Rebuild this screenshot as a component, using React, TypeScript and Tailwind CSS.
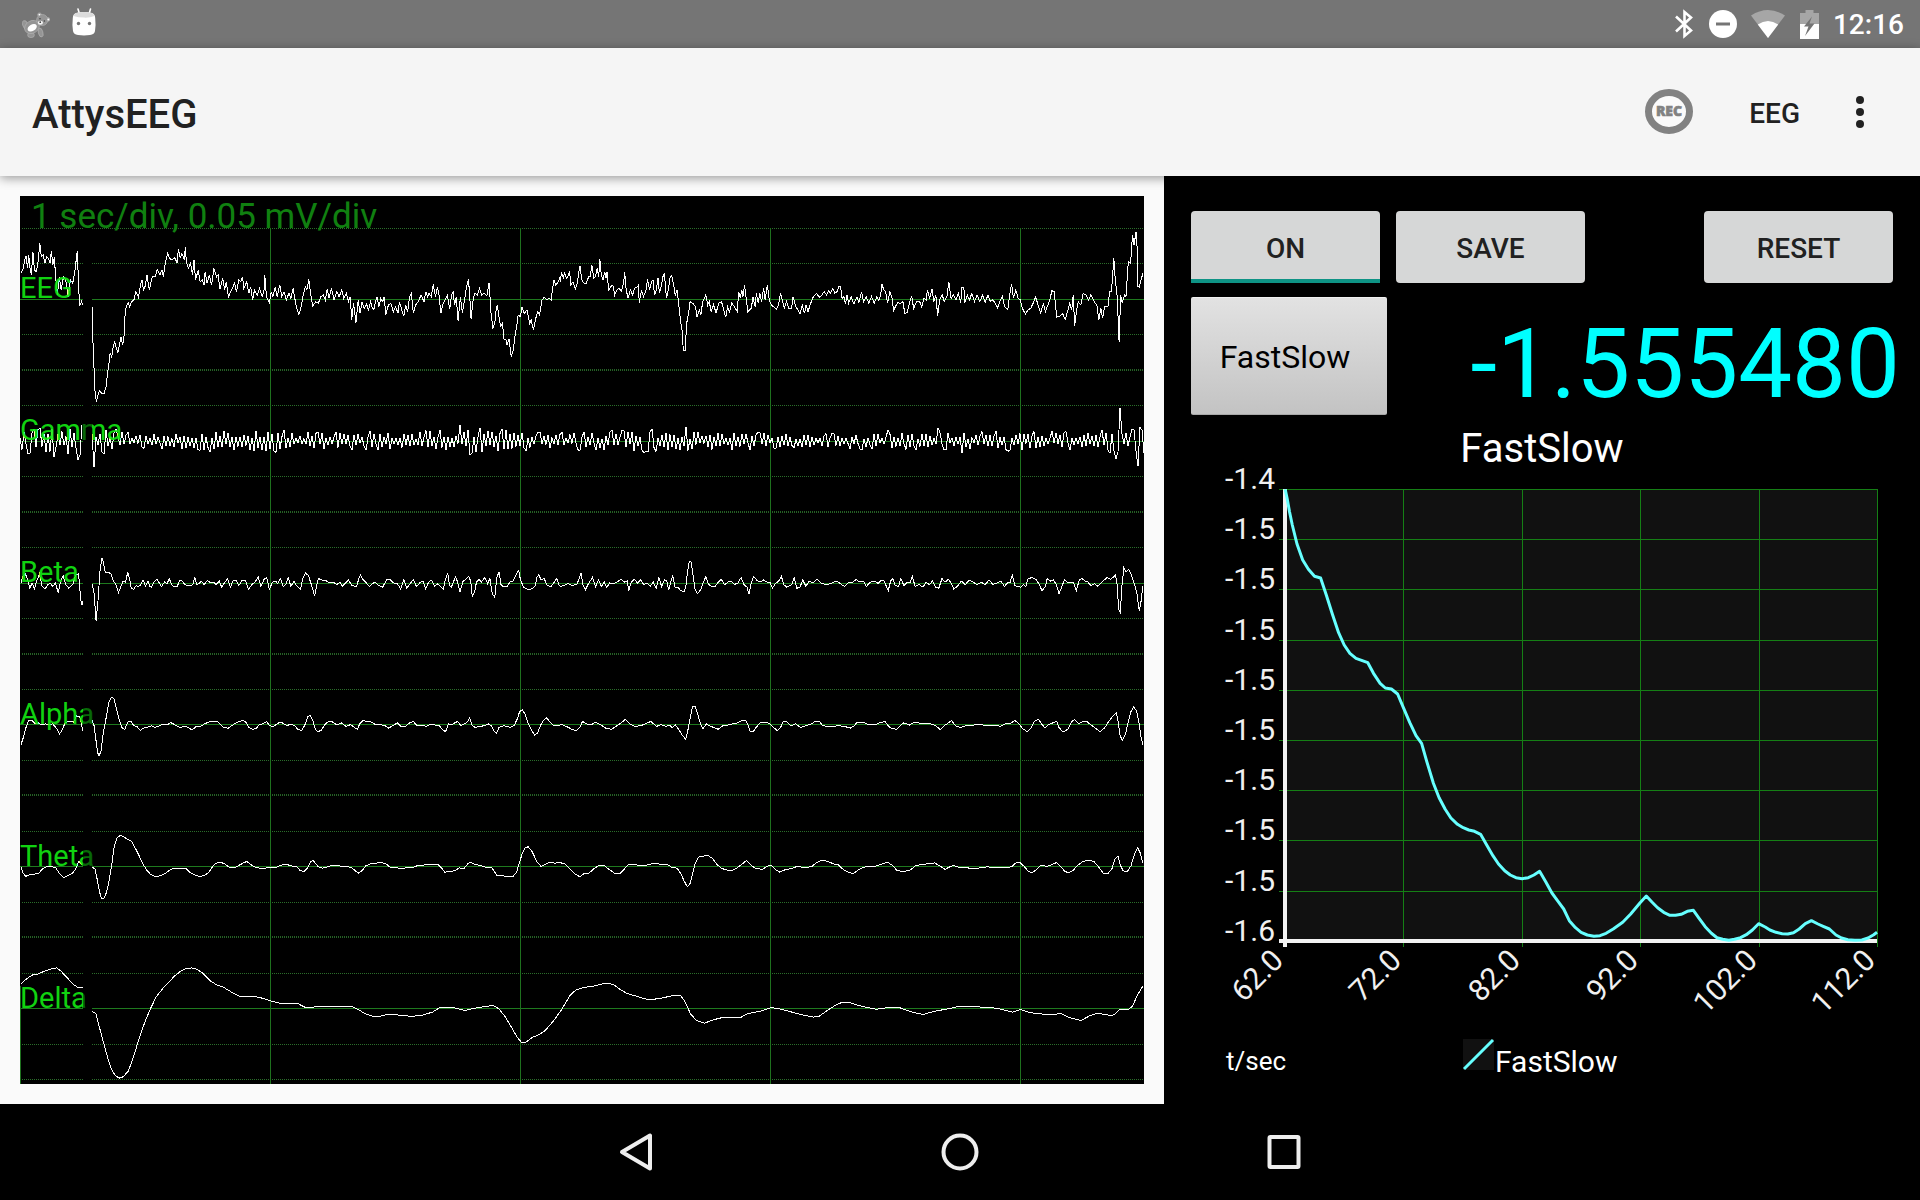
import React, { useState } from 'react';

interface Block {
  x: number;
  y: number;
  kx: number;
  ky: number;
  points: string;
}

const eegBlocks: Block[] = [
  {
    x: -20, y: -16, kx: 2.613, ky: 3,
    points:
      '55,280 62,262 64,240 68,228 72,265 75,225 78,262 82,285 86,215 90,270 95,275 100,240 104,190 108,230 113,225 117,250 122,230 127,235 131,250 134,212 138,255 142,232 146,300 150,345 155,290 160,330 166,290 172,300 178,352 184,300 190,310 196,270 202,212 205,310 208,378 213,365 216,375',
  },
  {
    x: -20, y: -16, kx: 2.613, ky: 3,
    points:
      '241,380 242,460 245,540 247,620 252,665 256,645 260,632 266,640 272,642 277,620 281,580 286,540 288,518 292,530 296,500 300,485 304,505 308,518 312,495 316,470 321,495 325,460 327,400 330,380 335,368 339,380 344,365 350,360 355,335 362,352 367,315 371,300 375,330 378,325 384,285 390,330 398,290 406,290 411,268 418,285 423,270 427,290 432,250 438,220 443,235 449,240 457,233 463,250 466,207 471,235 475,220 482,240 484,202 487,245 492,265 498,250 503,285 507,240 511,300 518,270 523,305 529,300 533,315 536,275 541,310 547,285 553,315 559,265 566,290 570,285 575,328 582,295 587,330 591,305 597,350 605,330 613,310 618,335 624,300 629,305 634,290 637,325 645,305 650,340 655,320 660,360 665,330 672,345 678,325 685,350 690,330 692,285 696,350 704,368 709,335 713,350 719,322 724,350 731,315 736,350 742,335 748,360 755,340 760,355 766,325 771,360 775,385 781,403 787,380 792,345 798,320 802,330 807,298 812,345 817,378 825,365 832,370 838,350 845,345 850,360 855,328 860,355 866,325 873,360 880,335 886,350 893,330 898,355 905,340 911,365 915,350 919,420 924,370 930,428 936,360 941,400 946,365 952,385 958,372 963,392 968,365 972,380 977,390 981,365 985,350 990,380 995,355 1000,365 1004,350 1008,405 1015,375 1021,370 1028,395 1034,380 1040,400 1044,365 1050,390 1055,408 1060,375 1065,395 1070,352 1075,340 1080,400 1086,375 1093,365 1100,345 1108,365 1113,335 1117,350 1121,340 1127,350 1132,313 1138,350 1143,320 1147,345 1152,400 1158,370 1163,360 1169,345 1175,388 1180,345 1184,335 1188,375 1192,350 1197,423 1203,350 1208,398 1214,360 1219,320 1224,298 1227,340 1231,418 1235,370 1240,340 1247,345 1253,325 1259,345 1265,340 1272,348 1278,308 1283,400 1288,443 1293,430 1297,380 1300,378 1304,410 1308,438 1313,430 1317,478 1322,480 1325,495 1330,478 1336,530 1341,510 1345,475 1350,440 1354,405 1360,410 1364,380 1370,400 1377,390 1384,430 1388,420 1394,450 1400,415 1405,395 1410,405 1416,360 1422,352 1429,360 1435,355 1440,360 1447,300 1452,315 1459,305 1463,290',
  },
  {
    x: 540, y: -16, kx: 2.613, ky: 3,
    points:
      '0,305 4,280 9,292 12,280 17,295 22,285 25,272 28,315 34,305 40,328 45,310 52,257 57,300 63,310 68,312 75,290 79,290 83,255 88,295 93,290 97,265 101,290 104,238 108,285 112,300 117,275 120,295 123,275 127,330 133,320 138,315 143,345 149,330 155,325 160,335 166,310 169,277 173,330 178,355 184,330 190,345 195,325 202,320 205,315 207,368 213,330 218,350 224,335 229,298 234,330 239,305 243,300 247,345 252,330 256,295 260,340 266,310 270,285 273,282 278,355 283,330 288,290 292,287 297,315 301,345 306,330 310,370 316,430 320,460 322,510 327,510 331,430 337,390 340,365 347,370 354,380 358,412 364,390 368,405 373,365 381,345 386,375 390,365 395,395 401,375 408,398 415,370 422,365 428,390 433,412 438,380 443,395 449,370 456,380 463,395 467,335 471,355 475,330 478,350 482,316 487,360 491,395 500,385 504,350 510,380 513,340 518,370 522,340 527,365 532,325 536,360 542,315 547,360 552,375 558,380 565,388 571,375 576,340 581,360 586,385 592,365 598,385 605,385 609,350 616,380 622,390 627,402 633,375 639,400 643,375 648,395 655,370 662,350 670,340 678,352 684,345 690,335 697,345 702,332 706,340 713,325 718,340 724,335 728,320 733,320 737,355 742,350 746,372 750,345 754,370 761,350 768,372 776,350 781,368 788,335 793,365 800,350 807,370 814,350 821,370 828,350 833,360 838,345 841,312 846,330 851,335 856,370 862,335 867,350 872,392 877,378 883,368 890,370 896,365 901,400 907,398 913,370 919,348 924,385 932,365 940,365 945,380 951,355 957,360 960,330 966,355 972,328 977,365 982,345 987,408 992,360 999,345 1004,365 1011,350 1016,306 1022,355 1028,345 1035,360 1041,340 1047,370 1050,322 1055,322 1058,368 1064,345 1070,360 1076,340 1083,365 1090,345 1097,365 1104,345 1111,368 1118,345 1125,365 1130,360 1138,370 1143,385 1149,365 1156,350 1162,380 1170,390 1175,345 1180,312 1185,355 1191,330 1197,355 1203,360 1208,385 1216,402 1223,390 1230,385 1237,368 1243,350 1249,375 1256,400 1263,370 1268,395 1275,375 1280,360 1285,332 1291,335 1295,375 1298,412 1306,408 1313,400 1320,418 1326,395 1332,370 1337,390 1341,345 1345,438 1350,390 1354,365 1361,375 1367,340 1374,345 1381,360 1387,345 1392,355 1398,368 1403,375 1408,420 1413,385 1418,415 1423,380 1432,380 1436,335 1441,335 1447,235 1451,300 1456,350 1461,485 1465,345 1469,370 1475,345 1479,350 1485,245 1491,250 1496,165 1500,195 1505,155 1508,200 1510,320 1514,322 1518,300 1524,278',
  },
];

const betaBlocks: Block[] = [
  {
    x: -20, y: 344, kx: 2.613, ky: 2.8,
    points:
      '55,120 60,100 66,95 72,110 78,135 84,120 90,137 96,115 103,95 110,130 118,137 125,125 132,122 138,130 145,120 152,148 158,115 165,100 172,125 180,135 190,125 198,98 204,95 208,120 210,165 214,182 217,170',
  },
  {
    x: -20, y: 344, kx: 2.613, ky: 2.8,
    points:
      '241,122 246,150 251,227 256,170 261,90 266,50 270,62 275,90 282,90 290,95 296,115 303,125 310,147 316,130 322,115 328,118 334,90 339,110 343,135 349,138 356,128 363,130 368,125 374,112 380,128 387,115 391,130 396,132 402,118 410,110 416,120 422,130 430,118 437,122 442,108 450,128 456,130 463,130 470,113 477,115 483,125 490,128 497,128 504,125 509,105 514,125 520,122 526,115 533,125 542,113 550,120 558,118 565,125 573,115 579,132 588,118 595,108 602,132 610,112 617,112 624,128 633,112 642,115 649,138 658,125 666,118 675,104 682,130 690,110 697,105 704,138 712,118 720,115 726,122 733,108 740,130 747,125 753,105 760,130 768,115 775,128 785,138 792,105 798,92 806,100 812,120 818,140 822,157 828,125 832,108 842,112 850,112 860,120 870,118 880,125 888,118 895,130 903,120 910,112 920,128 932,130 937,110 942,98 948,110 955,118 965,130 973,122 980,118 990,128 1000,132 1010,112 1018,110 1028,120 1038,122 1047,137 1055,112 1063,135 1072,122 1080,110 1088,130 1097,120 1105,115 1112,137 1120,118 1128,112 1136,130 1144,122 1150,130 1158,138 1164,110 1170,92 1174,125 1179,133 1184,120 1190,103 1195,115 1202,145 1210,115 1217,110 1225,102 1230,115 1234,158 1240,145 1245,118 1252,110 1258,118 1267,105 1274,122 1280,108 1286,150 1293,160 1298,105 1304,90 1309,125 1317,132 1325,130 1333,118 1340,115 1347,100 1355,85 1360,112 1368,132 1378,138 1390,137 1398,130 1403,105 1408,97 1414,112 1422,108 1430,128 1440,130 1448,118 1455,108 1462,130',
  },
  {
    x: 540, y: 344, kx: 2.529, ky: 2.8,
    points:
      '0,130 10,128 20,122 30,127 42,125 48,110 53,93 58,125 64,140 72,122 82,105 90,130 97,112 105,130 112,118 118,133 126,120 136,122 145,117 155,110 163,118 170,115 174,142 180,118 188,110 196,120 204,112 212,125 220,120 228,130 236,118 243,135 250,105 257,130 264,112 270,115 275,140 280,118 285,100 291,132 298,132 305,142 314,145 319,125 323,85 327,60 332,62 337,105 342,140 348,150 356,138 362,120 369,102 376,125 384,130 392,130 400,118 408,110 416,125 425,118 433,115 441,125 450,120 458,105 465,125 473,132 478,152 484,118 490,102 497,112 506,118 515,112 524,118 532,120 537,135 545,122 553,115 560,102 566,125 573,132 580,128 586,125 592,105 599,135 607,132 614,112 622,130 630,115 640,120 650,110 662,122 676,125 688,120 700,115 712,125 720,130 728,120 740,118 750,110 756,118 768,115 775,130 785,118 795,115 805,122 812,112 820,115 830,142 836,115 842,108 848,128 856,130 862,108 870,128 878,118 885,120 891,102 898,130 908,125 918,132 926,118 934,125 942,115 950,132 958,135 966,108 974,118 982,110 990,122 996,138 1006,128 1015,115 1025,125 1035,112 1045,118 1055,125 1065,118 1075,125 1085,112 1095,125 1105,120 1115,115 1124,130 1132,120 1138,120 1144,97 1150,128 1158,130 1165,132 1172,125 1178,130 1184,108 1195,105 1205,112 1212,125 1219,142 1228,130 1232,108 1240,115 1248,112 1255,125 1262,150 1270,128 1276,110 1283,118 1290,118 1298,118 1306,142 1313,112 1320,108 1328,115 1335,118 1343,128 1352,122 1360,130 1368,120 1376,112 1384,105 1392,110 1398,105 1405,98 1409,125 1413,195 1417,203 1421,130 1426,77 1432,90 1438,82 1444,95 1452,120 1459,150 1465,198 1469,175 1474,130',
  },
];

const alphaBlocks: Block[] = [
  {
    x: -20, y: 344, kx: 2.613, ky: 2.8,
    points:
      '55,573 62,550 68,525 75,505 84,505 92,515 100,512 108,518 118,515 128,517 138,515 148,528 156,543 163,530 170,512 180,508 192,510 200,492 208,495 213,515 216,535',
  },
  {
    x: -20, y: 344, kx: 2.613, ky: 2.8,
    points:
      '241,505 246,520 250,555 255,595 259,605 264,590 270,540 277,500 284,455 291,440 298,445 305,475 312,505 318,525 326,530 334,510 342,508 350,520 358,522 366,533 375,527 386,524 396,520 404,525 413,522 424,517 436,518 446,511 458,518 470,525 482,522 492,525 502,532 512,523 524,522 534,515 545,510 556,508 568,508 576,517 585,525 596,527 608,518 620,510 636,505 644,512 650,525 660,530 670,528 676,518 686,515 697,508 704,520 715,522 728,512 738,512 750,520 760,515 770,520 778,530 788,533 796,520 804,495 811,491 818,508 824,530 831,537 840,532 850,515 860,508 870,510 880,518 892,512 904,522 916,517 926,525 934,530 940,515 948,506 960,508 972,510 982,518 994,517 1006,520 1016,527 1026,520 1038,512 1048,522 1060,522 1070,512 1080,508 1090,520 1102,518 1114,522 1126,515 1136,518 1148,520 1156,530 1164,537 1172,515 1180,518 1188,512 1196,508 1204,520 1214,515 1222,508 1227,498 1234,520 1242,525 1254,522 1266,520 1276,515 1284,520 1291,535 1297,542 1304,525 1316,520 1326,522 1334,525 1344,518 1352,500 1358,480 1365,476 1372,488 1380,512 1388,530 1397,547 1405,540 1412,520 1420,505 1428,498 1436,508 1446,520 1456,520 1463,518',
  },
  {
    x: 540, y: 344, kx: 2.529, ky: 2.8,
    points:
      '0,515 16,522 30,530 42,534 50,525 57,508 68,515 78,518 90,510 104,518 116,527 130,530 142,522 154,512 166,502 176,515 190,522 204,520 216,515 230,508 244,522 256,517 268,522 276,518 284,525 292,518 300,530 308,545 318,558 323,535 329,500 335,467 342,466 349,490 356,518 362,528 370,515 380,522 390,525 400,530 412,520 424,518 436,515 448,512 460,506 470,505 476,520 481,535 488,538 496,525 506,512 518,510 530,514 540,525 550,534 558,525 564,510 572,508 584,520 596,515 608,525 622,520 636,515 646,507 656,507 664,520 676,522 690,522 704,520 720,522 734,527 744,520 752,510 766,510 780,517 794,518 808,512 822,508 830,520 838,528 852,530 860,520 868,512 876,515 884,518 896,510 910,513 924,515 938,515 950,520 962,531 972,520 982,512 990,505 1000,520 1012,525 1026,520 1040,520 1054,516 1070,518 1084,519 1100,520 1114,521 1126,515 1138,515 1150,505 1160,514 1170,528 1182,537 1192,525 1200,508 1210,502 1218,515 1226,526 1236,517 1246,512 1256,507 1262,525 1272,538 1284,530 1294,508 1302,503 1312,515 1322,508 1332,508 1342,517 1354,527 1366,537 1378,525 1388,508 1398,493 1407,484 1411,505 1416,545 1422,562 1430,545 1437,510 1444,480 1451,468 1458,478 1464,510 1469,550 1474,573',
  },
];

const thetaBlocks: Block[] = [
  {
    x: -20, y: 344, kx: 2.613, ky: 2.8,
    points:
      '55,917 60,932 67,942 78,937 90,936 102,932 112,920 124,914 134,914 146,918 156,935 166,945 178,940 190,932 198,920 206,900 214,908',
  },
  {
    x: -20, y: 344, kx: 2.613, ky: 2.8,
    points:
      '241,917 248,920 254,950 260,985 265,1003 271,1005 277,990 284,960 292,910 299,855 306,833 315,827 325,832 333,838 343,843 352,860 362,880 372,905 384,925 394,937 406,943 420,940 434,932 446,922 458,919 474,920 486,920 498,932 510,938 520,942 532,940 544,932 552,920 562,906 574,902 586,906 600,917 612,918 626,910 636,904 645,900 654,908 664,915 676,918 688,921 700,917 720,917 736,910 750,909 764,913 776,915 784,925 794,929 804,918 811,902 818,897 824,905 832,915 842,919 856,915 868,911 884,912 900,915 916,916 926,924 936,933 946,926 956,912 968,907 982,905 996,903 1008,906 1020,917 1034,918 1050,919 1064,918 1080,917 1092,911 1104,911 1118,908 1132,909 1144,908 1154,918 1162,930 1176,929 1190,925 1200,918 1212,920 1222,907 1230,902 1242,909 1256,911 1270,917 1284,917 1290,925 1298,939 1312,940 1326,943 1340,943 1350,930 1357,905 1364,880 1372,862 1380,859 1388,868 1396,885 1404,903 1414,914 1424,908 1438,902 1450,905 1463,903',
  },
  {
    x: 540, y: 344, kx: 2.529, ky: 2.8,
    points:
      '0,903 14,908 26,922 38,935 50,943 60,935 74,932 86,920 98,912 112,912 124,922 138,933 152,934 162,922 172,910 188,909 204,912 220,910 238,905 254,908 270,908 282,916 296,919 306,935 314,955 322,971 328,965 334,940 342,905 350,888 362,885 374,883 386,892 398,910 410,920 422,924 434,926 448,918 460,908 472,897 484,912 496,920 512,922 524,914 534,910 544,922 556,930 570,923 584,920 600,914 616,917 636,915 648,904 660,897 676,899 690,906 704,910 716,922 728,930 742,934 756,922 772,915 792,915 812,908 828,902 842,912 852,925 866,928 884,926 898,913 914,908 930,907 948,904 962,914 974,922 986,915 996,911 1010,917 1030,918 1050,920 1080,915 1100,918 1125,918 1142,915 1152,905 1162,902 1174,914 1184,927 1192,932 1204,924 1216,910 1230,914 1242,910 1256,903 1266,914 1276,927 1286,932 1298,925 1308,912 1320,902 1336,896 1350,900 1362,915 1374,933 1386,934 1396,920 1404,892 1411,885 1417,910 1424,926 1434,930 1444,912 1453,880 1461,862 1468,878 1474,904',
  },
];

const deltaBlocks: Block[] = [
  {
    x: -20, y: 344, kx: 2.613, ky: 2.8,
    points:
      '55,1243 70,1228 85,1218 100,1215 115,1208 130,1202 148,1198 160,1208 175,1225 190,1243 202,1252 216,1254',
  },
  {
    x: -20, y: 344, kx: 2.613, ky: 2.8,
    points:
      '241,1320 250,1325 260,1365 270,1405 280,1445 290,1478 300,1498 311,1507 322,1503 335,1487 345,1460 358,1415 370,1375 382,1340 395,1308 408,1280 425,1256 440,1240 455,1222 470,1209 485,1200 500,1198 515,1202 530,1213 548,1233 565,1245 585,1253 605,1266 625,1277 665,1278 690,1284 712,1292 730,1297 780,1299 800,1310 825,1307 860,1307 920,1306 940,1317 955,1327 975,1334 995,1333 1015,1328 1040,1330 1075,1334 1105,1330 1130,1322 1150,1309 1180,1308 1215,1317 1245,1310 1270,1306 1288,1303 1303,1312 1320,1335 1335,1362 1350,1390 1362,1406 1375,1406 1390,1393 1405,1387 1425,1373 1445,1348 1463,1322',
  },
  {
    x: 540, y: 344, kx: 2.529, ky: 2.8,
    points:
      '0,1322 12,1300 25,1276 40,1260 60,1253 90,1248 115,1241 135,1244 150,1257 170,1270 195,1278 225,1288 255,1283 285,1276 305,1276 315,1290 330,1327 345,1345 365,1353 390,1343 415,1336 455,1338 475,1326 505,1320 535,1309 560,1314 590,1323 615,1330 640,1336 655,1334 675,1318 695,1304 710,1296 730,1294 750,1302 770,1307 800,1314 825,1310 855,1308 880,1318 905,1326 920,1328 945,1320 975,1314 1005,1307 1035,1305 1065,1308 1105,1311 1130,1318 1145,1322 1165,1315 1185,1322 1205,1326 1240,1329 1268,1326 1290,1338 1318,1345 1340,1332 1360,1325 1395,1332 1405,1326 1415,1314 1435,1316 1448,1305 1460,1275 1474,1249',
  },
];

const fastSlowBlock: Block = {
  x: 16, y: 45, kx: 2.119, ky: 3,
  points:
    '223,88 227,115 232,155 238,195 248,252 260,300 272,328 285,349 298,354 310,405 323,463 336,518 348,555 360,580 373,595 398,608 410,640 424,670 435,684 448,687 461,702 474,745 487,788 500,827 512,850 523,905 537,970 549,1013 562,1048 574,1074 588,1093 600,1103 612,1110 624,1114 637,1123 650,1155 663,1187 675,1212 688,1232 700,1245 712,1253 725,1256 738,1253 750,1245 762,1234 775,1265 788,1299 800,1322 813,1347 825,1382 838,1403 850,1417 863,1425 877,1429 890,1427 903,1420 918,1407 938,1387 955,1362 975,1328 988,1308 1000,1326 1012,1343 1025,1357 1038,1366 1050,1366 1062,1363 1075,1354 1088,1351 1100,1375 1113,1400 1126,1420 1138,1433 1150,1438 1163,1441 1175,1438 1188,1433 1200,1424 1213,1410 1226,1391 1240,1401 1250,1410 1263,1417 1276,1421 1288,1422 1300,1418 1312,1407 1325,1391 1338,1382 1352,1392 1363,1399 1376,1407 1390,1425 1402,1434 1415,1439 1430,1441 1445,1440 1458,1434 1470,1424 1477,1417',
};

const toPoints = (block: Block) =>
  block.points
    .split(' ')
    .map((pair) => {
      const [x, y] = pair.split(',').map(Number);
      return `${(block.x + x / block.kx).toFixed(1)},${(block.y + y / block.ky).toFixed(1)}`;
    })
    .join(' ');

// Gamma is broadband noise, [x, peak amplitude] gives its envelope
const gammaEnvelope = [
  [0, 12], [60, 16], [63, 20], [72, 30], [76, 16], [90, 12], [120, 8], [160, 9], [200, 12], [250, 12],
  [330, 9], [420, 12], [455, 14], [490, 12], [530, 8], [570, 10], [620, 12], [700, 11], [780, 7],
  [850, 9], [940, 9], [1000, 11], [1060, 9], [1085, 12], [1124, 15],
];

const gammaSpikes: Record<number, number> = {
  34: 16, 58: 19, 74: 26, 96: -12, 440: -16, 450: 14, 666: -14, 868: -11, 918: -13, 942: 12,
  1096: 18, 1100: -33, 1112: -12, 1118: 25, 1120: -14,
};

const gammaPoints = (from: number, to: number) => {
  const points: string[] = [];
  let seed = 7919 + from;
  let sign = 1;
  for (let x = from; x <= to; x += 2) {
    seed = (seed * 16807) % 2147483647;
    const random = seed / 2147483647;
    const i = Math.max(1, gammaEnvelope.findIndex(([ex]) => ex >= x));
    const [x0, a0] = gammaEnvelope[i - 1];
    const [x1, a1] = gammaEnvelope[i];
    const amplitude = a0 + ((a1 - a0) * (x - x0)) / (x1 - x0);
    if (random < 0.85) sign = -sign;
    const value = gammaSpikes[x] ?? sign * amplitude * (0.2 + 0.8 * random);
    points.push(`${x},${(245 + value).toFixed(1)}`);
  }
  return points.join(' ');
};

const channels = [
  { label: 'EEG', y: 102, blocks: eegBlocks },
  { label: 'Gamma', y: 244, blocks: [] },
  { label: 'Beta', y: 386, blocks: betaBlocks },
  { label: 'Alpha', y: 528, blocks: alphaBlocks },
  { label: 'Theta', y: 670, blocks: thetaBlocks },
  { label: 'Delta', y: 812, blocks: deltaBlocks },
];

const TracePlot: React.FC = () => {
  const rows = Array.from({ length: 25 }, (_, i) => i);

  return (
    <svg viewBox="0 0 1124 888" className="block w-full h-auto bg-black font-[Roboto,sans-serif]">
      <g shapeRendering="crispEdges" fill="none">
        {rows.map((row) => {
          const y = Math.round(32 + 35.46 * row) + 0.5;
          const isDouble = row % 4 === 0 && row > 0 && row < 24;
          if (row % 4 === 2) {
            return <line key={row} x1="0" x2="1124" y1={y} y2={y} stroke="#1e7a1e" />;
          }
          return (
            <line
              key={row}
              x1="2"
              x2="1124"
              y1={isDouble ? y - 0.5 : y}
              y2={isDouble ? y - 0.5 : y}
              stroke={isDouble ? '#256025' : '#2a6e2a'}
              strokeWidth={isDouble ? 2 : 1}
              strokeDasharray="1 1"
            />
          );
        })}
        {[250.5, 500.5, 750.5, 1000.5].map((x) => (
          <line key={x} x1={x} x2={x} y1="32" y2="888" stroke="#1e701e" />
        ))}
        <line x1="0.5" x2="0.5" y1="790" y2="888" stroke="#1e701e" />
        <rect x="63" y="32" width="9" height="856" fill="#000" />
        <g stroke="#fff">
          {channels.map((channel) =>
            channel.blocks.map((block, i) => (
              <polyline key={`${channel.label}-${i}`} points={toPoints(block)} />
            ))
          )}
          <polyline points={gammaPoints(0, 62)} />
          <polyline points={gammaPoints(72, 1124)} />
        </g>
      </g>
      <text x="11" y="32" fontSize="35" fill="#108010">
        1 sec/div, 0.05 mV/div
      </text>
      <g fontSize="29" fill="#13e813" fillOpacity="0.92">
        {channels.map((channel) => (
          <text key={channel.label} x="0" y={channel.y}>
            {channel.label}
          </text>
        ))}
      </g>
      <rect x="63" y="40" width="9" height="848" fill="#000" fillOpacity="0.5" />
    </svg>
  );
};

const yLabels = ['-1.4', '-1.5', '-1.5', '-1.5', '-1.5', '-1.5', '-1.5', '-1.5', '-1.5', '-1.6'];
const xLabels = ['62.0', '72.0', '82.0', '92.0', '102.0', '112.0'];

const FastSlowChart: React.FC = () => (
  <svg viewBox="0 0 756 689" className="block w-full h-auto font-[Roboto,sans-serif]">
    <text x="378" y="47" fontSize="40" fill="#fff" textAnchor="middle">
      FastSlow
    </text>
    <rect x="121" y="74" width="593" height="452" fill="#111" />
    <g shapeRendering="crispEdges">
      <g stroke="#157f15">
        {yLabels.map((_, i) => {
          const y = Math.round(74 + 50.2 * i) + 0.5;
          return <line key={i} x1="115" x2="714" y1={y} y2={y} />;
        })}
        {xLabels.map((_, i) => {
          const x = Math.round(121 + 118.4 * i) + 0.5;
          return <line key={i} x1={x} x2={x} y1="74" y2="532" />;
        })}
      </g>
      <rect x="119" y="74" width="4" height="458" fill="#f2f2f2" />
      <rect x="115" y="524" width="598" height="4" fill="#f2f2f2" />
    </g>
    <polyline
      points={toPoints(fastSlowBlock)}
      fill="none"
      stroke="#66ffff"
      strokeWidth="3"
      strokeLinejoin="round"
    />
    <g fontSize="30" fill="#f0f0f0" textAnchor="end">
      {yLabels.map((label, i) => (
        <text key={i} x="111" y={Math.round(74 + 50.2 * i)}>
          {label}
        </text>
      ))}
      {xLabels.map((label, i) => {
        const x = Math.round(121 + 118.4 * i);
        return (
          <text key={label} x={x} y="547" transform={`rotate(-45 ${x} 547)`}>
            {label}
          </text>
        );
      })}
    </g>
    <text x="62" y="655" fontSize="26" fill="#fff">
      t/sec
    </text>
    <rect x="299" y="624" width="31" height="31" fill="#111" />
    <path d="M300 654L329 625" stroke="#66ffff" strokeWidth="3" />
    <text x="331" y="657" fontSize="30" fill="#fff">
      FastSlow
    </text>
  </svg>
);

const StatusBar: React.FC = () => (
  <div className="flex h-12 items-center justify-between bg-[#757575] pl-[22px] pr-4 text-white">
    <div className="flex items-center gap-[22px]">
      {/* Teddy */}
      <svg width="28" height="28" viewBox="0 0 28 28" className="mt-1">
        <g fill="#959595" stroke="#b4b4b4" strokeWidth="0.6">
          <ellipse cx="9" cy="23" rx="3.4" ry="2.6" />
          <ellipse cx="3.4" cy="13" rx="2.6" ry="4.6" transform="rotate(-20 3.4 13)" />
          <ellipse cx="18.6" cy="20.5" rx="2.3" ry="4.6" transform="rotate(-15 18.6 20.5)" />
          <ellipse cx="10" cy="15" rx="7.8" ry="6.2" transform="rotate(-30 10 15)" />
          <circle cx="17.5" cy="2.8" r="1.9" />
          <circle cx="26" cy="7.4" r="1.9" />
          <circle cx="20.2" cy="8" r="5.6" />
        </g>
        <ellipse cx="10.2" cy="15.8" rx="5" ry="3.2" fill="#fff" transform="rotate(-30 10.2 15.8)" />
        <ellipse cx="18.4" cy="10.8" rx="2.6" ry="2" fill="#f4f4f4" />
        <circle cx="18" cy="6.8" r="0.8" fill="#444" />
        <circle cx="22.4" cy="9" r="0.8" fill="#444" />
        <circle cx="18.2" cy="10.2" r="0.9" fill="#444" />
        <circle cx="17.4" cy="2.6" r="0.9" fill="#fff" />
        <circle cx="26.4" cy="7.4" r="1" fill="#fff" />
      </svg>
      {/* Android */}
      <svg width="24" height="28" viewBox="0 0 24 28" className="-mt-1">
        <path d="M6 1L7.5 6M18.5 1L17 6" stroke="#fff" strokeWidth="1.6" strokeLinecap="round" />
        <path
          d="M4 5Q12 3 20 5Q23 6 23.2 10Q24 17 23 23Q22.5 26.5 18 27Q12 27.8 6 27Q1.5 26.5 1 23Q0 17 .8 10Q1 6 4 5Z"
          fill="#fff"
        />
        <path d="M4 5Q12 3 20 5Q22 6 22.5 8Q17 10 12 9.6Q6 9.6 1.5 8Q2 6 4 5Z" fill="#dcdcdc" />
        <circle cx="6.5" cy="15.5" r="1.7" fill="#757575" />
        <circle cx="17.5" cy="15.5" r="1.7" fill="#757575" />
      </svg>
    </div>
    <div className="flex items-center gap-[14px]">
      <svg width="18" height="30" viewBox="0 0 18 30" fill="none" stroke="#fff" strokeWidth="2.6">
        <path d="M1 7.5L16 21.5L9.5 27V3L16 8.5L1 22.5" />
      </svg>
      <svg width="30" height="28" viewBox="0 0 30 28">
        <circle cx="16" cy="14" r="14" fill="#fff" />
        <path d="M9 14H23" stroke="#757575" strokeWidth="3" />
      </svg>
      <svg width="34" height="28" viewBox="0 0 34 28">
        <path d="M0 5.5Q17 -5.500 34 5.5L17 28Z" fill="#a6a6a6" />
        <path d="M6.8 14.5Q17 7.500 27.2 14.5L17 28Z" fill="#fff" />
      </svg>
      <svg width="20" height="29" viewBox="0 0 20 29">
        <path d="M1 3H6.5V0H14.5V3H20V14H1Z" fill="#a6a6a6" />
        <path d="M1 14H20V29H1Z" fill="#fff" />
        <path d="M13 6.500L5 16.5H9.5L6 26L15.5 13.5H10.5Z" fill="#757575" />
      </svg>
      <span className="pt-0.5 text-[28px] leading-8 font-medium">12:16</span>
    </div>
  </div>
);

const Toolbar: React.FC = () => (
  <header className="relative z-10 flex h-32 items-center justify-between bg-[#f5f5f5] pl-8 pr-10 text-[#212121] shadow-[0_2px_10px_rgba(0,0,0,0.4)]">
    <h1 className="pt-1.5 text-[40px] leading-[48px] font-medium">AttysEEG</h1>
    <div className="flex items-center">
      <button aria-label="Record" className="mr-14">
        <svg width="48" height="46" viewBox="0 0 48 46">
          <ellipse cx="24" cy="22.5" rx="20.500" ry="19" fill="#fafafa" stroke="#828282" strokeWidth="7" />
          <text
            x="24"
            y="27"
            fontSize="14"
            textAnchor="middle"
            fill="#828282"
            stroke="#828282"
            strokeWidth="0.6"
            className="font-['Open_Sans',sans-serif] font-extrabold"
          >
            REC
          </text>
        </svg>
      </button>
      <button className="mr-10 pt-1 text-[28px] leading-8 font-medium">EEG</button>
      <button aria-label="More options" className="flex w-10 flex-col items-center gap-1">
        <span className="size-2 rounded-full bg-[#212121]" />
        <span className="size-2 rounded-full bg-[#212121]" />
        <span className="size-2 rounded-full bg-[#212121]" />
      </button>
    </div>
  </header>
);

const panelButton = 'h-[72px] w-[189px] bg-[#d6d7d7] text-[28px] leading-8 font-medium text-[#212121]';

const App: React.FC = () => {
  const [recording, setRecording] = useState(true);

  return (
    <div className="flex min-h-screen flex-col bg-black font-[Roboto,sans-serif]">
      <StatusBar />
      <Toolbar />

      <main className="grid grid-cols-[97fr_63fr]">
        <section className="bg-[#fafafa] p-5">
          <TracePlot />
        </section>

        <section className="bg-black pt-[35px]">
          <div className="flex gap-4 px-[27px]">
            <button
              aria-pressed={recording}
              onClick={() => setRecording(!recording)}
              className={`${panelButton} rounded-t border-b-4 pt-2 ${recording ? 'border-[#0e9385]' : 'border-[#9e9e9e]'}`}
            >
              {recording ? 'ON' : 'OFF'}
            </button>
            <button className={`${panelButton} rounded pt-1`}>SAVE</button>
            <button className={`${panelButton} ml-auto rounded pt-1`}>RESET</button>
          </div>

          <div className="mt-[14px] flex items-center justify-between pl-[27px] pr-5">
            <button className="h-[118px] w-[196px] rounded-xs border-t border-b border-t-[#f0f0f0] border-b-[#a8a8a8] bg-linear-to-b from-[#e2e2e2] to-[#c3c3c3] pt-0.5 pr-2 text-[32px] leading-10 text-black">
              FastSlow
            </button>
            <output className="pt-4 text-[96px] leading-[100px] text-[#00ffff]">-1.555480</output>
          </div>

          <FastSlowChart />
        </section>
      </main>

      <nav className="mx-auto grid h-24 w-full max-w-[972px] grid-cols-3 place-items-center">
        <button aria-label="Back">
          <svg width="40" height="40" viewBox="0 0 40 40" fill="none" stroke="#eee" strokeWidth="4">
            <path d="M34 3.5V36.5L6 20Z" strokeLinejoin="round" />
          </svg>
        </button>
        <button aria-label="Home">
          <svg width="40" height="40" viewBox="0 0 40 40" fill="none" stroke="#eee" strokeWidth="4">
            <circle cx="20" cy="20" r="16.5" />
          </svg>
        </button>
        <button aria-label="Recent apps">
          <svg width="40" height="40" viewBox="0 0 40 40" fill="none" stroke="#eee" strokeWidth="4">
            <rect x="5.5" y="5" width="29" height="30" rx="1" />
          </svg>
        </button>
      </nav>
    </div>
  );
};

export default App;
